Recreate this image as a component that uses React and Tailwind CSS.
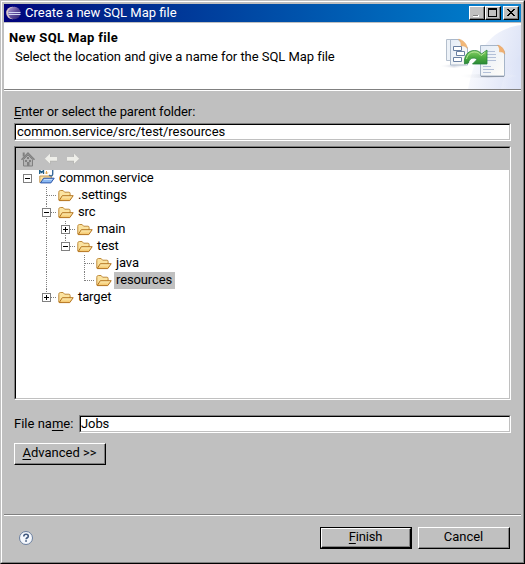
const sunken =
  "border border-t-[#808080] border-l-[#808080] border-r-white border-b-white";
const sunkenInner =
  "h-full border border-t-black border-l-black border-r-[#c0c0c0] border-b-[#c0c0c0]";

function EclipseIcon() {
  return (
    <svg width="16" height="16" viewBox="0 0 16 16">
      <defs>
        <linearGradient id="ecl" x1="0" y1="0" x2="1" y2="1">
          <stop offset="0" stopColor="#b9a9d6" />
          <stop offset="0.5" stopColor="#5f4c9c" />
          <stop offset="1" stopColor="#2b2070" />
        </linearGradient>
      </defs>
      <ellipse cx="6.5" cy="8" rx="6.3" ry="6.2" fill="#d9c6c8" />
      <circle cx="8.3" cy="8" r="6.2" fill="url(#ecl)" />
      <path d="M2.5 7.5h12M2.5 9.5h12" stroke="#d3d8f4" strokeWidth="1" />
    </svg>
  );
}

function TitleButton({ children }) {
  return (
    <div className="h-[14px] w-4 border border-t-white border-l-white border-r-black border-b-black bg-[#c0c0c0]">
      <div className="h-full border-r border-b border-[#808080]">
        <svg width="13" height="11" viewBox="0 0 13 11" shapeRendering="crispEdges">
          {children}
        </svg>
      </div>
    </div>
  );
}

function HeaderArt() {
  return (
    <svg width="87" height="66" viewBox="0 0 87 66" className="shrink-0">
      <defs>
        <linearGradient id="sky" x1="0" y1="0" x2="1" y2="0.3">
          <stop offset="0" stopColor="#ffffff" />
          <stop offset="1" stopColor="#dfe5f7" />
        </linearGradient>
        <linearGradient id="swirl" x1="0" y1="0" x2="1" y2="0">
          <stop offset="0" stopColor="#edf0fb" />
          <stop offset="1" stopColor="#d9e1f6" />
        </linearGradient>
        <linearGradient id="sheet" x1="0" y1="0" x2="1" y2="1">
          <stop offset="0" stopColor="#e4ecf7" />
          <stop offset="1" stopColor="#fffdf8" />
        </linearGradient>
        <linearGradient id="green" x1="0" y1="0" x2="0" y2="1">
          <stop offset="0" stopColor="#8fd36c" />
          <stop offset="0.5" stopColor="#4fae42" />
          <stop offset="1" stopColor="#2c8a34" />
        </linearGradient>
        <linearGradient id="shade" x1="0" y1="0" x2="1" y2="0">
          <stop offset="0" stopColor="#ffffff" stopOpacity="0" />
          <stop offset="0.5" stopColor="#ccd1dd" />
          <stop offset="1" stopColor="#ffffff" stopOpacity="0" />
        </linearGradient>
      </defs>
      <path d="M87 2C58 6 42 25 34 66H87Z" fill="url(#sky)" />
      <path d="M87 31C75 43 69 53 67 66H87Z" fill="url(#swirl)" opacity="0.5" />
      <ellipse cx="54" cy="53" rx="30" ry="2" fill="url(#shade)" opacity="0.7" />
      <ellipse cx="20" cy="43" rx="16" ry="1.5" fill="url(#shade)" opacity="0.7" />
      <path d="M12.500 16.500h13v21h-13z" fill="#edf2f8" stroke="#b4bfcd" />
      <path d="M16.500 16.500H24l9.500 8v17.500h-17z" fill="url(#sheet)" stroke="#a9b7c9" />
      <path d="M24.500 16.200c4 .3 8.500 4.500 8.800 9.300-2-2.500-4-2.800-6.300-2.500.3-2.800-.5-5-2.500-6.800z" fill="#f2b878" stroke="#e6ab6c" strokeWidth=".5" />
      <path d="M19.500 23.500h8v4h-8zM22.500 28.500h8v4h-8zM19.500 34.500h8v4h-8z" fill="#fff" stroke="#6a80a2" />
      <path d="M46.500 22.500h18.500l5.500 6v24.500h-24z" fill="url(#sheet)" stroke="#a6b5c8" />
      <path d="M47 53.500h23" stroke="#8d98a8" strokeWidth="1" />
      <path d="M63.500 22.200c4 .5 7 4 7.300 9-1.500-2-3-2.600-5.300-2.300.3-2.700-.2-5-2-6.700z" fill="#f2b070" stroke="#e6a25f" strokeWidth=".5" />
      <path d="M53 28.500h8M53 31.500h9M53 34.500h9M51 37.500h11M49 43.500h8M49 46.500h11M49 49.500h8" stroke="#b3c0d8" />
      <path d="M30.500 41c-1-7.500 3-13.500 10-13.500 3.500 0 5.500 1.500 7 3.500l5.500-4v14H38.500l4.500-4.500c-3.500-3-8-1-8.500 3.500z" fill="url(#green)" stroke="#25833a" strokeWidth=".8" strokeLinejoin="round" />
      <path d="M32.500 36c1-4.500 4-7 8-7 3.500 0 5 1.800 6.500 3.500l4-3" fill="none" stroke="#b7e69b" strokeWidth="1" />
    </svg>
  );
}

function HomeIcon() {
  return (
    <svg width="16" height="16" viewBox="0 0 16 16" className="shrink-0">
      <path d="M3.500 8.500V15h9V8.500L8 4z" fill="#b4b4b4" stroke="#808080" />
      <path d="M1.500 8.700 8 2.200l6.500 6.500" fill="none" stroke="#808080" strokeWidth="1.600" />
      <path d="M3.700 5.500V1.500" stroke="#808080" strokeWidth="2" />
      <path d="M5 9h2v2H5zM9 9h2v2H9zM7 6h2v2H7zM7 11h2.500v4H7z" fill="#808080" />
    </svg>
  );
}

function ArrowIcon({ flip }) {
  return (
    <svg width="14" height="12" viewBox="0 0 14 12" className={flip ? "shrink-0 -scale-x-100" : "shrink-0"}>
      <path d="M1 6.500 6.500 1.500V4.500H13V8.500H6.500V11.500Z" fill="#b2b2ad" />
      <path d="M.8 5.800 6 .8V4H13V7.800H6V10.800Z" fill="#eeeee9" />
    </svg>
  );
}

function FolderIcon() {
  return (
    <svg width="16" height="17" viewBox="0 0 16 17" className="shrink-0">
      <defs>
        <linearGradient id="fold" x1="0" y1="0" x2="0" y2="1">
          <stop offset="0" stopColor="#fff0b8" />
          <stop offset="1" stopColor="#f3c263" />
        </linearGradient>
      </defs>
      <path d="M.8 13V5.300C.8 4.200 1.400 3.500 2.300 3.500h2.800l1.500 1.700h4.300c.8 0 1.200.4 1.200 1.300V9L2.500 13.500Z" fill="#fbe3a0" stroke="#bf8a3a" />
      <path d="M1.200 13.600 4.300 8.700h10.900l-3.400 4.900z" fill="url(#fold)" stroke="#b4741f" strokeLinejoin="round" />
    </svg>
  );
}

function ProjectIcon() {
  return (
    <svg width="16" height="17" viewBox="0 0 16 17" className="shrink-0">
      <path d="M.8 12.500V6h11.500V9L3 12.500z" fill="#f9dfa0" stroke="#c29652" />
      <path d="M1.500 12.900 4.600 8.200h10.600l-3.300 4.700z" fill="#8bb9f2" stroke="#2d56a8" strokeLinejoin="round" />
      <path d="M5 9.500h8.200" stroke="#c4dcfa" />
      <path d="M.7 4V.5L2.600 2.500 4.500.5V4" fill="none" stroke="#1f5c86" strokeWidth="1.300" />
      <path d="M7.500 1v3M6.200 2.500 7.500 4l1.300-1.500" fill="none" stroke="#e0a850" />
      <path d="M13.700 0v4c0 1.300-.8 1.900-1.700 1.900-.9 0-1.500-.4-1.800-1" fill="none" stroke="#3a6b9c" strokeWidth="1.400" />
    </svg>
  );
}

const DOTS = { stroke: "#808080", strokeDasharray: "1 1" };

/* One 19px wide indent cell of the tree: guide lines and the expander box. */
function Guide({ kind }) {
  const box = kind.includes("+") || kind.includes("-");
  const up = kind.includes("u");
  const down = kind.includes("d");
  const right = kind.includes("r");
  return (
    <svg width="19" height="17" viewBox="0 0 19 17" shapeRendering="crispEdges" className="shrink-0">
      {up && <path d="M9.500 0V9" {...DOTS} />}
      {down && <path d="M9.500 8V17" {...DOTS} />}
      {right && <path d="M10 8.500H19" {...DOTS} />}
      {box && <rect x="5.500" y="4.500" width="8" height="8" fill="#fff" stroke="#808080" />}
      {box && <path d="M7 8.500h5" stroke="#000" />}
      {kind.includes("+") && <path d="M9.500 6v5" stroke="#000" />}
    </svg>
  );
}

const ROWS = [
  { name: "common.service", guides: ["-"], project: true },
  { name: ".settings", guides: ["", "udr"] },
  { name: "src", guides: ["", "udr-"] },
  { name: "main", guides: ["", "ud", "udr+"] },
  { name: "test", guides: ["", "ud", "ur-"] },
  { name: "java", guides: ["", "ud", "", "udr"] },
  { name: "resources", guides: ["", "ud", "", "ur"], selected: true },
  { name: "target", guides: ["", "ur+"] },
];

function TreeRow({ row }) {
  return (
    <div className="flex h-[17px]">
      {row.guides.map((g, i) => (
        <Guide key={i} kind={g} />
      ))}
      <span className="w-[2px]" />
      {row.project ? <ProjectIcon /> : <FolderIcon />}
      <span className="w-[2px]" />
      <span
        className={
          "h-[17px] pl-[2px] leading-[16px] tracking-[-0.12px] " +
          (row.selected ? "w-[61px] bg-[#c0c0c0]" : "")
        }
      >
        {row.name}
      </span>
    </div>
  );
}

function Button({ children, primary, className }) {
  return (
    <button
      className={
        "h-[22px] text-center " + (primary ? "border border-black " : "") + className
      }
    >
      <div className="h-full border border-t-white border-l-white border-r-black border-b-black">
        <div
          className={
            "h-full border-r border-b border-[#808080] " +
            (primary ? "leading-[16px]" : "leading-[18px]")
          }
        >
          {children}
        </div>
      </div>
    </button>
  );
}

export default function App() {
  return (
    <div className="h-[564px] w-[525px] border border-t-[#c0c0c0] border-l-[#c0c0c0] border-r-black border-b-black bg-[#c0c0c0] font-['Roboto','Liberation_Sans',sans-serif] text-[13px] leading-[16px] text-black">
      <div className="flex h-full flex-col border border-t-white border-l-white border-r-[#808080] border-b-[#808080] px-[2px] pt-[2px]">
        <div className="flex h-[18px] shrink-0 items-center bg-linear-to-r from-[#00007b] to-[#1084d0] pr-[2px] pl-[2px]">
          <EclipseIcon />
          <span className="-mt-[2px] ml-[3px] flex-1 leading-[17px] text-white">Create a new SQL Map file</span>
          <TitleButton>
            <rect x="3" y="8" width="6" height="2" fill="#fff" />
            <rect x="3" y="8" width="5" height="1" fill="#808080" />
          </TitleButton>
          <TitleButton>
            <path d="M2.500 1v8.500h8V1" fill="none" stroke="#000" />
            <path d="M2 1h9v2H2z" fill="#000" />
          </TitleButton>
          <span className="w-[2px]" />
          <TitleButton>
            <path d="M3 2h2v1h1v1h2V3h1V2h2v1h-1v1H9v1H8v1h1v1h1v1h1v1H9V8H8V7H6v1H5v1H3V8h1V7h1V6h1V5H5V4H4V3H3z" fill="#000" />
          </TitleButton>
        </div>

        <div className="mt-px flex h-[67px] shrink-0 justify-between border-b border-[#808080] bg-white">
          <div className="pt-[7px] pl-[5px]">
            <div className="leading-[16px] font-bold tracking-[0.35px]">New SQL Map file</div>
            <div className="mt-[2px] pl-[6px] leading-[18px] tracking-[-0.05px]">
              Select the location and give a name for the SQL Map file
            </div>
          </div>
          <HeaderArt />
        </div>
        <div className="h-px shrink-0 bg-white" />

        <div className="flex flex-col px-[10px] pt-[12px]">
          <div className="h-[20px] leading-[17px] tracking-[-0.11px]">
            <span className="underline underline-offset-2">E</span>nter or select the parent folder:
          </div>
          <div className={"h-[18px] w-[497px] " + sunken}>
            <div className={sunkenInner + " bg-white pl-px leading-[14px] tracking-[-0.04px]"}>
              common.service/src/test/resources
            </div>
          </div>

          <div className={"mt-[5px] h-[254px] w-[497px] " + sunken}>
            <div className={sunkenInner + " bg-white"}>
              <div className="flex h-[22px] items-center bg-[#c0c0c0] pl-[4px]">
                <HomeIcon />
                <span className="w-[8px]" />
                <ArrowIcon />
                <span className="w-[8px]" />
                <ArrowIcon flip />
              </div>
              <div className="pl-[2px]">
                {ROWS.map((row) => (
                  <TreeRow key={row.name} row={row} />
                ))}
              </div>
            </div>
          </div>

          <div className="mt-[15px] flex">
            <div className="w-[65px] leading-[17px]">
              File na<span className="underline underline-offset-2">m</span>e:
            </div>
            <div className={"h-[18px] w-[432px] " + sunken}>
              <div className={sunkenInner + " bg-white leading-[14px] tracking-[-0.1px]"}>Jobs</div>
            </div>
          </div>

          <Button className="mt-[10px] w-[92px]">
            <span className="underline underline-offset-2">A</span>dvanced &gt;&gt;
          </Button>
        </div>

        <div className="mt-auto flex h-[48px] shrink-0 items-start border-t border-[#808080]">
          <div className="flex w-full border-t border-white pt-[11px] pl-[14px]">
            <svg width="16" height="22" viewBox="0 0 16 22" className="shrink-0">
              <circle cx="8" cy="11" r="6.500" fill="#f4f7fc" stroke="#6a7f9f" />
              <path d="M5.800 9.500c0-1.500 1-2.200 2.300-2.200s2.200.8 2.200 1.900c0 1.500-2.200 1.600-2.200 3.100" fill="none" stroke="#41597f" strokeWidth="1.600" />
              <path d="M7.200 13.200h1.700v1.600H7.200z" fill="#41597f" />
            </svg>
            <Button primary className="ml-[286px] w-[92px] tracking-[-0.2px]">
              <span className="underline underline-offset-2">F</span>inish
            </Button>
            <Button className="ml-[6px] w-[92px]">Cancel</Button>
          </div>
        </div>
      </div>
    </div>
  );
}
